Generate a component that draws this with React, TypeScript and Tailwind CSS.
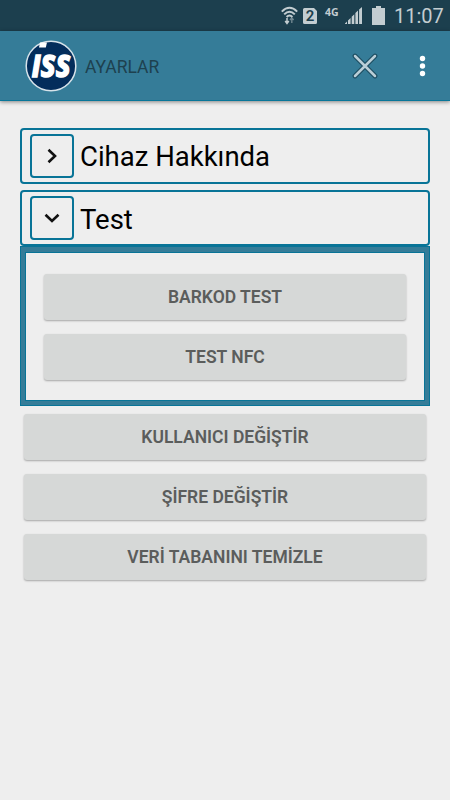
import type { ReactNode } from 'react';

function StatusBar() {
  return (
    <div className="flex h-[31px] items-center bg-[#1c3f4e] pl-[281px] text-[#c3cdd1]">
      <svg width="17" height="19" viewBox="0 0 17 19" fill="none" stroke="currentColor" strokeWidth="2">
        <path d="M0.8 5.6Q8.5 -2 16.2 5.6" />
        <path d="M3.2 8.4Q8.5 3 13.8 8.4" />
        <path d="M5.6 11Q8.5 7.8 11.4 11" />
        <path d="M6 12v5M4.2 15l1.8 2.4L7.8 15" strokeWidth="1.5" />
        <path d="M10.8 17v-5M9 14l1.8-2.2 1.8 2.2" strokeWidth="1.4" opacity="0.5" />
      </svg>
      <div className="relative ml-[5px] h-4 w-[14px]">
        <svg className="absolute inset-0" width="14" height="16" viewBox="0 0 14 16" fill="currentColor">
          <path d="M1.5 0H11l3 3v11.5a1.5 1.5 0 0 1-1.5 1.5h-11A1.5 1.5 0 0 1 0 14.5v-13A1.5 1.5 0 0 1 1.5 0Z" />
        </svg>
        <span className="relative block text-center text-[15px] leading-[17px] font-semibold text-[#1c3f4e]">2</span>
      </div>
      <span className="mt-[-7px] ml-2 w-[15px] font-['Open_Sans',sans-serif] text-[10.5px] leading-3 font-bold">4G</span>
      <svg className="ml-[5px]" width="17" height="17" viewBox="0 0 17 17" fill="currentColor">
        <path d="M0 16.5l2-2V17H0zM3 13.5l2.6-2.6V17H3zM6.7 9.8l2.6-2.6V17H6.7zM10.4 6.1l2.6-2.6V17h-2.6zM14.1 2.4L17 0v17h-2.9z" />
      </svg>
      <svg className="ml-[10px]" width="13" height="19" viewBox="0 0 13 19" fill="currentColor">
        <path d="M4 0h5v2h4v17H0V2h4z" />
      </svg>
      <span className="ml-[9px] text-[20px] leading-6">11:07</span>
    </div>
  );
}

function Logo() {
  return (
    <svg className="overflow-visible" width="52" height="52" viewBox="0 0 52 52">
      <circle cx="26" cy="26" r="24.8" fill="#032d5b" stroke="#d7e3ea" strokeWidth="1.5" />
      <path d="M15 2.6h7L20.8 7.4H14z" fill="#fff" />
      <text
        x="6.8"
        y="36.5"
        textLength="39"
        lengthAdjust="spacingAndGlyphs"
        fill="#fff"
        stroke="#fff"
        strokeWidth="1.5"
        fontFamily="'Open Sans', sans-serif"
        fontSize="39"
        fontStyle="italic"
        fontWeight="700"
      >
        ıss
      </text>
    </svg>
  );
}

function AppBar() {
  return (
    <header className="relative flex h-[70px] items-center border-b border-[#087699] bg-[#357c98] pl-[25px] shadow-[0_1px_4px_rgba(0,0,0,0.45)]">
      <Logo />
      <h1 className="mt-0.5 ml-2 text-[17.5px] leading-6 text-[#1e414f]">AYARLAR</h1>
      <svg className="ml-auto" width="26" height="26" viewBox="0 0 26 26" strokeLinecap="round">
        <path d="M3 3l20 20M23 3L3 23" stroke="#1d4d61" strokeWidth="4.8" />
        <path d="M3 3l20 20M23 3L3 23" stroke="#b9ced7" strokeWidth="2.5" />
      </svg>
      <svg className="mr-[24px] ml-[41px]" width="7" height="22" viewBox="0 0 7 22" fill="#fff">
        <circle cx="3.5" cy="3.5" r="2.7" />
        <circle cx="3.5" cy="11" r="2.7" />
        <circle cx="3.5" cy="18.5" r="2.7" />
      </svg>
    </header>
  );
}

function SectionRow({ title, open = false }: { title: string; open?: boolean }) {
  return (
    <div className="flex h-[55.5px] items-center rounded-[4px] border-2 border-[#087497] pl-2">
      <span className="flex size-11 items-center justify-center rounded-[4px] border-2 border-[#087497]">
        <svg width="16" height="16" viewBox="0 0 16 16" fill="none" stroke="#111" strokeWidth="2.6">
          <path d={open ? 'M1.5 4.8L8 11l6.5-6.2' : 'M4.5 1.8L11 8l-6.5 6.2'} />
        </svg>
      </span>
      <span className="mt-[3.4px] ml-1.5 text-[27.5px] leading-8 text-black">{title}</span>
    </div>
  );
}

function Button({ children }: { children: ReactNode }) {
  return (
    <button className="block h-[46px] w-full rounded-[3px] bg-[#d6d8d7] text-[17.5px] font-semibold text-[#5b5d5c] shadow-[0_1px_2px_rgba(0,0,0,0.3)]">
      {children}
    </button>
  );
}

export default function App() {
  return (
    <div className="h-[800px] w-[450px] overflow-hidden bg-[#eeeeee] font-['Roboto',sans-serif]">
      <StatusBar />
      <AppBar />
      <main className="px-5 pt-[27px]">
        <SectionRow title="Cihaz Hakkında" />
        <div className="mt-[6.9px]">
          <SectionRow title="Test" open />
        </div>
        <section className="mt-[0.1px] h-40 border border-[#087497] bg-[#357c98] px-1 pt-[5px] pb-1">
          <div className="flex h-full flex-col gap-3.5 border border-[#087497] bg-[#eeeeee] px-[18px] pt-[21px]">
            <Button>BARKOD TEST</Button>
            <Button>TEST NFC</Button>
          </div>
        </section>
        <div className="mt-2 flex flex-col gap-3.5 px-1">
          <Button>KULLANICI DEĞİŞTİR</Button>
          <Button>ŞİFRE DEĞİŞTİR</Button>
          <Button>VERİ TABANINI TEMİZLE</Button>
        </div>
      </main>
    </div>
  );
}
